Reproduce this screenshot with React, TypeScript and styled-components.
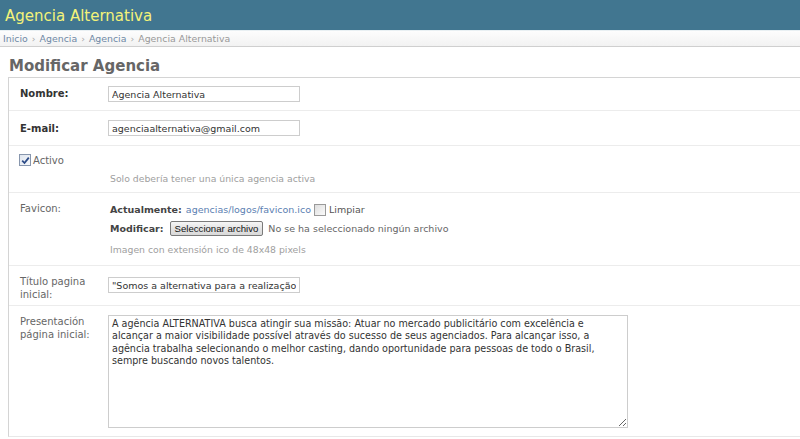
import React from "react";
import styled, { createGlobalStyle } from "styled-components";

const Global = createGlobalStyle`
  html, body { margin: 0; padding: 0; background: #fff; }
  body {
    font-family: "DejaVu Sans", Verdana, sans-serif;
    color: #333;
    overflow: hidden;
  }
`;

const Header = styled.header`
  height: 30px;
  background: #417690;
  display: flex;
  align-items: center;
  padding: 0 5px;
  box-sizing: border-box;
`;

const Branding = styled.h1`
  margin: 0;
  font-size: 15px;
  font-weight: normal;
  color: #f4f379;
  line-height: 18px;
  padding-top: 1px;
`;

const Breadcrumbs = styled.nav`
  border-top: 1px solid #e9f0f3;
  border-bottom: 1px solid #cfcfcf;
  background: linear-gradient(#fdfdfd, #f2f2f2);
  height: 15px;
  line-height: 15px;
  padding: 0 3px;
  font-size: 9.4px;
  color: #999;
`;

const Crumb = styled.a`
  color: #6f89a6;
  text-decoration: none;
`;

const Sep = styled.span`
  color: #aaa;
  margin: 0 4px;
`;

const Content = styled.main`
  padding-left: 8px;
`;

const Title = styled.h2`
  margin: 10px 0 2px 1px;
  font-size: 15px;
  line-height: 18px;
  font-weight: bold;
  color: #666;
`;

const Module = styled.section`
  border-top: 1px solid #d4d4d4;
  border-left: 1px solid #d4d4d4;
  border-bottom: 1px solid #e8e8e8;
`;

const Row = styled.div<{ $pt: number; $pb: number; $last?: boolean }>`
  display: flex;
  align-items: flex-start;
  padding: ${(p) => p.$pt}px 12px ${(p) => p.$pb}px 11px;
  border-bottom: ${(p) => (p.$last ? "none" : "1px solid #ececec")};
`;

const ColumnRow = styled(Row)`
  flex-direction: column;
`;

const Label = styled.label<{ $pt: number; $required?: boolean }>`
  width: 88px;
  flex-shrink: 0;
  box-sizing: border-box;
  padding: ${(p) => p.$pt}px 8px 0 0;
  font-size: 10px;
  line-height: 13px;
  font-weight: ${(p) => (p.$required ? "bold" : "normal")};
  color: ${(p) => (p.$required ? "#333" : "#666")};
`;

const TextInput = styled.input`
  width: 192px;
  height: 16px;
  box-sizing: border-box;
  margin: 2px 0;
  padding: 0 3px;
  border: 1px solid #cdcdcd;
  font-family: "DejaVu Sans", Verdana, sans-serif;
  font-size: 9.5px;
  color: #333;
  background: #fff;
  outline: none;
`;

const TextArea = styled.textarea`
  width: 520px;
  height: 113px;
  box-sizing: border-box;
  margin: 2px 0;
  padding: 2px 10px 2px 3px;
  border: 1px solid #cdcdcd;
  font-family: "DejaVu Sans", Verdana, sans-serif;
  font-size: 9.6px;
  line-height: 12.3px;
  color: #333;
  background: #fff;
  outline: none;
  overflow: hidden;
`;

const CheckLine = styled.div`
  display: flex;
  align-items: center;
  height: 14px;
  gap: 2px;
  margin-left: -1px;
  font-size: 10px;
  color: #666;
`;

const Box = styled.span<{ $checked?: boolean }>`
  display: inline-flex;
  align-items: center;
  justify-content: center;
  width: 12px;
  height: 12px;
  box-sizing: border-box;
  border: 1px solid ${(p) => (p.$checked ? "#8796ad" : "#9a9a9a")};
  background: ${(p) =>
    p.$checked
      ? "linear-gradient(135deg, #dfe5ee, #f6f8fb)"
      : "linear-gradient(135deg, #dedede, #fbfbfb)"};
  flex-shrink: 0;
`;

const Help = styled.p<{ $mt: number }>`
  margin: ${(p) => p.$mt}px 0 0 90px;
  font-size: 9.3px;
  line-height: 12px;
  color: #a0a0a0;
`;

const Fields = styled.div`
  display: flex;
  flex-direction: column;
  margin-left: 2px;
`;

const FieldLine = styled.div<{ $h: number; $mt?: number }>`
  display: flex;
  align-items: center;
  height: ${(p) => p.$h}px;
  margin-top: ${(p) => p.$mt ?? 0}px;
  font-size: 9.5px;
  color: #666;
  white-space: nowrap;
`;

const Strong = styled.b`
  color: #444;
  margin-right: 4px;
`;

const Link = styled.a`
  color: #5b80b2;
  text-decoration: none;
  margin-right: 3px;
`;

const Plain = styled.span<{ $ml?: number }>`
  color: #555;
  margin-left: ${(p) => p.$ml ?? 0}px;
`;

const FileButton = styled.button`
  height: 15px;
  box-sizing: border-box;
  margin: 0 5px 0 2px;
  padding: 0 4px;
  border: 1px solid #7a7a7a;
  border-radius: 2px;
  background: linear-gradient(#f6f6f6, #e4e4e4 50%, #d9d9d9);
  font-family: "Liberation Sans", Arial, sans-serif;
  font-size: 9.6px;
  line-height: 13px;
  color: #111;
`;

const FieldHelp = styled.div`
  margin-top: 7px;
  font-size: 9.3px;
  line-height: 12px;
  color: #a0a0a0;
`;

const Check = () => (
  <svg width="9" height="9" viewBox="0 0 9 9">
    <path d="M1.2 4.6 L3.5 7 L7.8 1.6" fill="none" stroke="#2b4a86" strokeWidth="1.8" />
  </svg>
);

const presentation =
  "A agência ALTERNATIVA busca atingir sua missão: Atuar no mercado publicitário com excelência e alcançar a maior visibilidade possível através do sucesso de seus agenciados. Para alcançar isso, a agência trabalha selecionando o melhor casting, dando oportunidade para pessoas de todo o Brasil, sempre buscando novos talentos.";

export default function App() {
  return (
    <>
      <Global />
      <Header>
        <Branding>Agencia Alternativa</Branding>
      </Header>
      <Breadcrumbs>
        <Crumb href="#">Inicio</Crumb>
        <Sep>›</Sep>
        <Crumb href="#">Agencia</Crumb>
        <Sep>›</Sep>
        <Crumb href="#">Agencia</Crumb>
        <Sep>›</Sep>
        Agencia Alternativa
      </Breadcrumbs>
      <Content>
        <Title>Modificar Agencia</Title>
        <Module>
          <Row $pt={6} $pb={6}>
            <Label $pt={3} $required>Nombre:</Label>
            <TextInput defaultValue="Agencia Alternativa" />
          </Row>
          <Row $pt={7} $pb={7}>
            <Label $pt={4} $required>E-mail:</Label>
            <TextInput defaultValue="agenciaalternativa@gmail.com" />
          </Row>
          <ColumnRow $pt={7} $pb={7}>
            <CheckLine>
              <Box $checked>
                <Check />
              </Box>
              Activo
            </CheckLine>
            <Help $mt={6}>Solo debería tener una única agencia activa</Help>
          </ColumnRow>
          <Row $pt={8} $pb={9}>
            <Label $pt={1}>Favicon:</Label>
            <Fields>
              <FieldLine $h={17}>
                <Strong>Actualmente:</Strong>
                <Link href="#">agencias/logos/favicon.ico</Link>
                <Box />
                <Plain $ml={3}>Limpiar</Plain>
              </FieldLine>
              <FieldLine $h={18} $mt={1}>
                <Strong>Modificar:</Strong>
                <FileButton type="button">Seleccionar archivo</FileButton>
                No se ha seleccionado ningún archivo
              </FieldLine>
              <FieldHelp>Imagen con extensión ico de 48x48 pixels</FieldHelp>
            </Fields>
          </Row>
          <Row $pt={9} $pb={4}>
            <Label $pt={0}>Título pagina inicial:</Label>
            <TextInput defaultValue={'"Somos a alternativa para a realização dos seus sonhos"'} />
          </Row>
          <Row $pt={7} $pb={6} $last>
            <Label $pt={2}>Presentación página inicial:</Label>
            <TextArea defaultValue={presentation} />
          </Row>
        </Module>
      </Content>
    </>
  );
}
